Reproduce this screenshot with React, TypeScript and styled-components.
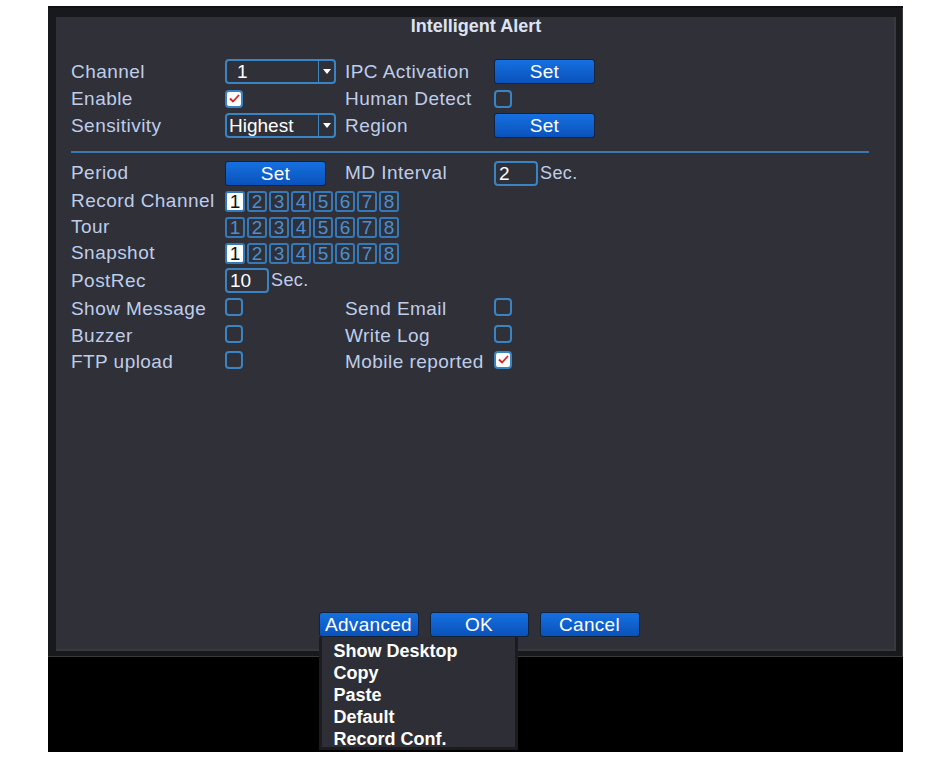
import styled, { createGlobalStyle } from "styled-components";

const Global = createGlobalStyle`
  html, body {
    margin: 0;
    padding: 0;
    background: #ffffff;
  }
  body {
    font-family: "Liberation Sans", Arial, sans-serif;
  }
`;

const channels = [1, 2, 3, 4, 5, 6, 7, 8];

function Check({ checked }: { checked?: boolean }) {
  return (
    <CheckBox $checked={checked}>
      {checked ? (
        <svg width="11" height="9" viewBox="0 0 11 9">
          <polyline points="1,4.5 4,7.5 10,1" fill="none" stroke="#e02020" strokeWidth="1.8" />
        </svg>
      ) : null}
    </CheckBox>
  );
}

function Channels({ on }: { on?: number }) {
  return (
    <NumGroup>
      {channels.map((n) => (
        <NumBox key={n} $on={n === on}>{n}</NumBox>
      ))}
    </NumGroup>
  );
}

function Select({ value, $tight }: { value: string; $tight?: boolean }) {
  return (
    <SelectBox>
      <SelectValue $tight={$tight}>{value}</SelectValue>
      <SelectArrow>
        <svg width="8" height="5" viewBox="0 0 8 5">
          <polygon points="0,0 8,0 4,5" fill="#ffffff" />
        </svg>
      </SelectArrow>
    </SelectBox>
  );
}

export default function App() {
  return (
    <>
      <Global />
      <Screen>
        <Window>
          <Panel>
            <Title>Intelligent Alert</Title>

            <Section>
              <Row $h={27}>
                <Label>Channel</Label>
                <Select value="1" />
                <Label>IPC Activation</Label>
                <Button $w={101}>Set</Button>
              </Row>
              <Row $h={27}>
                <Label>Enable</Label>
                <Check checked />
                <Label>Human Detect</Label>
                <Check />
              </Row>
              <Row $h={27}>
                <Label>Sensitivity</Label>
                <Select value="Highest" $tight />
                <Label>Region</Label>
                <Button $w={101}>Set</Button>
              </Row>
            </Section>

            <Divider />

            <Section>
              <Row $h={30}>
                <Label>Period</Label>
                <Button $w={101}>Set</Button>
                <Label>MD Interval</Label>
                <Inline>
                  <Field $w={44}>2</Field>
                  <Unit>Sec.</Unit>
                </Inline>
              </Row>
              <Row $h={26}>
                <Label>Record Channel</Label>
                <Wide>
                  <Channels on={1} />
                </Wide>
              </Row>
              <Row $h={26}>
                <Label>Tour</Label>
                <Wide>
                  <Channels />
                </Wide>
              </Row>
              <Row $h={26}>
                <Label>Snapshot</Label>
                <Wide>
                  <Channels on={1} />
                </Wide>
              </Row>
              <Row $h={29}>
                <Label>PostRec</Label>
                <Wide>
                  <Inline>
                    <Field $w={44}>10</Field>
                    <Unit>Sec.</Unit>
                  </Inline>
                </Wide>
              </Row>
              <Row $h={28}>
                <Label>Show Message</Label>
                <CheckCell><Check /></CheckCell>
                <Label>Send Email</Label>
                <CheckCell><Check /></CheckCell>
              </Row>
              <Row $h={26}>
                <Label>Buzzer</Label>
                <CheckCell><Check /></CheckCell>
                <Label>Write Log</Label>
                <CheckCell><Check /></CheckCell>
              </Row>
              <Row $h={26}>
                <Label>FTP upload</Label>
                <CheckCell><Check /></CheckCell>
                <Label>Mobile reported</Label>
                <CheckCell><Check checked /></CheckCell>
              </Row>
            </Section>

            <Footer>
              <MenuAnchor>
                <Button $w={100}>Advanced</Button>
                <Menu>
                  <MenuItem>Show Desktop</MenuItem>
                  <MenuItem>Copy</MenuItem>
                  <MenuItem>Paste</MenuItem>
                  <MenuItem>Default</MenuItem>
                  <MenuItem>Record Conf.</MenuItem>
                </Menu>
              </MenuAnchor>
              <Button $w={99}>OK</Button>
              <Button $w={100}>Cancel</Button>
            </Footer>
          </Panel>
        </Window>
      </Screen>
    </>
  );
}

const Screen = styled.div`
  margin: 6px 0 0 48px;
  width: 855px;
  height: 746px;
  background: #000000;
`;

const Window = styled.div`
  box-sizing: border-box;
  height: 651px;
  padding: 9px 7px 6px 8px;
  background: #18191c;
  border-top: 2px solid #101012;
  box-shadow: inset -1px -1px 0 #3a3a3d;
`;

const Panel = styled.div`
  position: relative;
  box-sizing: border-box;
  height: 100%;
  display: flex;
  flex-direction: column;
  padding: 0 27px 14px 15px;
  background: #2f3038;
  box-shadow: inset -2px -2px 0 #383840;
`;

const Title = styled.div`
  height: 22px;
  line-height: 22px;
  margin-top: -2px;
  margin-bottom: 21px;
  padding-left: 12px;
  text-align: center;
  font-size: 18px;
  font-weight: bold;
  color: #dde3f2;
`;

const Section = styled.div`
  display: flex;
  flex-direction: column;
`;

const Row = styled.div<{ $h: number }>`
  display: grid;
  grid-template-columns: 154px 120px 149px 1fr;
  align-items: center;
  height: ${(p) => p.$h}px;
`;

const Label = styled.span`
  font-size: 19px;
  letter-spacing: 0.45px;
  color: #bfcde9;
  white-space: nowrap;
`;

const Wide = styled.div`
  grid-column: 2 / -1;
  display: flex;
  align-items: center;
`;

const Inline = styled.div`
  display: flex;
  align-items: center;
  gap: 2px;
`;

const Unit = styled.span`
  font-size: 18px;
  letter-spacing: 0.4px;
  color: #bfcde9;
`;

const Field = styled.div<{ $w: number }>`
  box-sizing: border-box;
  width: ${(p) => p.$w}px;
  height: 25px;
  padding-left: 3px;
  border: 2px solid #3a84c4;
  border-radius: 4px;
  font-size: 19px;
  line-height: 21px;
  color: #ffffff;
`;

const SelectBox = styled.div`
  box-sizing: border-box;
  display: flex;
  width: 111px;
  height: 25px;
  border: 2px solid #3a84c4;
  border-radius: 4px;
`;

const SelectValue = styled.div<{ $tight?: boolean }>`
  flex: 1;
  padding-left: ${(p) => (p.$tight ? 2 : 10)}px;
  font-size: 19px;
  line-height: 21px;
  color: #ffffff;
`;

const SelectArrow = styled.div`
  width: 15px;
  display: flex;
  align-items: center;
  justify-content: center;
  border-left: 1px solid #3a84c4;
`;

const CheckCell = styled.div`
  display: flex;
  margin-top: -5px;
`;

const CheckBox = styled.div<{ $checked?: boolean }>`
  box-sizing: border-box;
  width: 18px;
  height: 18px;
  display: flex;
  align-items: center;
  justify-content: center;
  border: 2px solid #3a84c4;
  border-radius: 4px;
  background: ${(p) => (p.$checked ? "#ffffff" : "transparent")};
`;

const NumGroup = styled.div`
  display: flex;
  gap: 2px;
`;

const NumBox = styled.div<{ $on?: boolean }>`
  box-sizing: border-box;
  width: 20px;
  height: 21px;
  border: 2px solid #3679b8;
  border-radius: 3px;
  background: ${(p) => (p.$on ? "#ffffff" : "transparent")};
  color: ${(p) => (p.$on ? "#111111" : "#4a8fd2")};
  font-size: 19px;
  line-height: 17px;
  text-align: center;
`;

const Button = styled.div<{ $w: number }>`
  box-sizing: border-box;
  width: ${(p) => p.$w}px;
  height: 25px;
  border: 1px solid #10223c;
  border-radius: 3px;
  background: linear-gradient(#1670e0, #0a52bb);
  color: #ffffff;
  font-size: 19px;
  letter-spacing: 0.3px;
  line-height: 23px;
  text-align: center;
`;

const Divider = styled.div`
  height: 2px;
  margin: 12px 0 5px;
  background: #3b78ad;
`;

const Footer = styled.div`
  margin-top: auto;
  display: flex;
  justify-content: center;
  gap: 11px;
  padding-left: 18px;
`;

const MenuAnchor = styled.div`
  position: relative;
`;

const Menu = styled.div`
  position: absolute;
  top: 100%;
  left: 0;
  box-sizing: border-box;
  width: 199px;
  height: 113px;
  padding: 3px 0 0 12px;
  background: #2e2f36;
  border: 3px solid #1c1c20;
  border-top: 0;
  z-index: 2;
`;

const MenuItem = styled.div`
  height: 22px;
  line-height: 22px;
  font-size: 18px;
  font-weight: bold;
  color: #ffffff;
`;
